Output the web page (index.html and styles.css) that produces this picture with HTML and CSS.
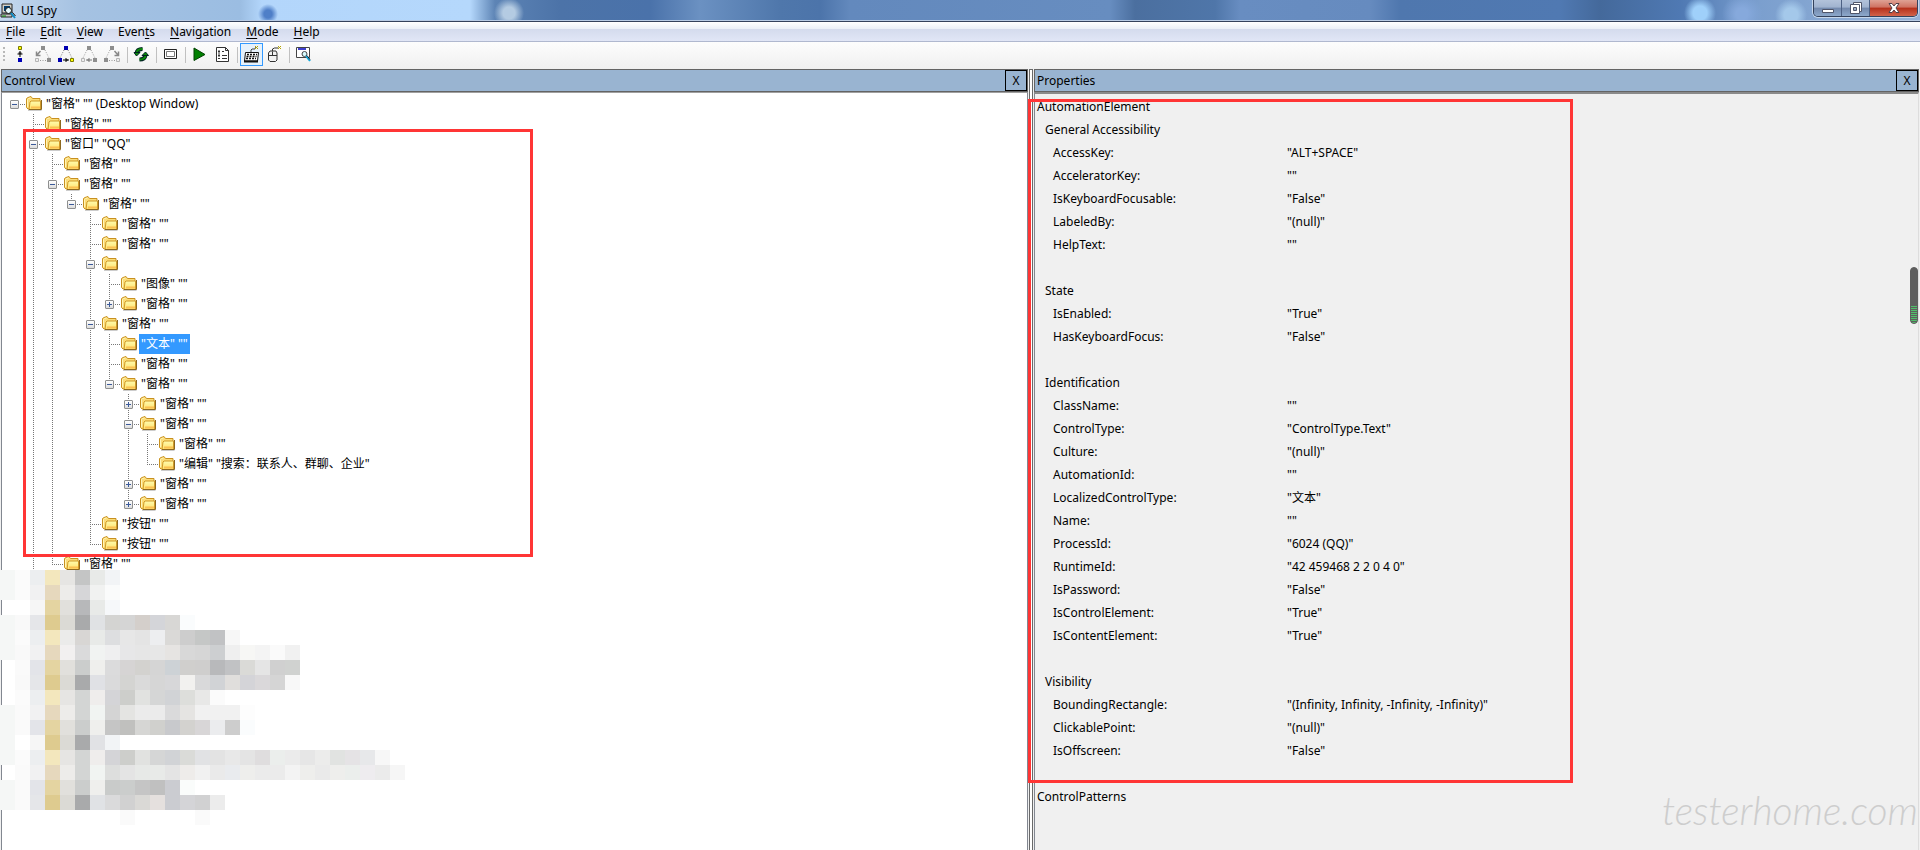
FILE: index.html
```html
<!DOCTYPE html>
<html lang="zh-CN">
<head>
<meta charset="utf-8">
<title>UI Spy</title>
<link rel="stylesheet" href="styles.css">
</head>
<body>
<svg class="defs" aria-hidden="true">
  <defs>
    <linearGradient id="fold" x1="0" y1="0" x2="0" y2="1"><stop offset="0" stop-color="#fffcae"/><stop offset="1" stop-color="#ffdf68"/></linearGradient>
    <symbol id="folder" viewBox="0 0 16 16">
      <path d="M2 14.500h13.500" stroke="#9a9a9a" opacity=".5"/>
      <path d="M.5 11.500V2.500L2 1.500l3-1 1.500 2h7.500v10l-1 .5H2z" fill="#fbdc78" stroke="#c8901f"/>
      <path d="M1.500 11V3.500l1-1 2-.5" fill="none" stroke="#fff5b8"/>
      <path d="M4 6l1-1h9.500v8.500H3z" fill="url(#fold)" stroke="#d09a28"/>
      <path d="M5 11.500h9" stroke="#fbc052" stroke-width="2"/>
      <path d="M15.500 4v9.500H3" fill="none" stroke="#8d681f"/>
    </symbol>
  </defs>
</svg>
<div class="window">
  <header class="titlebar">
    <svg class="app-icon" viewBox="0 0 16 16" aria-hidden="true">
      <path d="M2 1h10v9H2z" fill="#d4d0c8" stroke="#222"/><path d="M4 3h6v5H4z" fill="#003a6c"/>
      <path d="M1 11h11v3H1z" fill="#c5c5c5" stroke="#222"/><path d="M2 13h4" stroke="#080"/>
      <circle cx="8.500" cy="7.500" r="3" fill="#e6fbff" stroke="#111"/><path d="M11 10l4 5" stroke="#0b8ec9" stroke-width="2"/><path d="M12.500 9.500l3 3.500" stroke="#111"/>
    </svg>
    <h1 class="title">UI Spy</h1>
    <div class="caption-buttons">
      <button class="cap" aria-label="Minimize"><svg viewBox="0 0 14 14" class="cap-icon"><path d="M1.500 8.500h11v3h-11z" fill="#fff" stroke="#50566a"/></svg></button>
      <button class="cap" aria-label="Restore"><svg viewBox="0 0 14 14" class="cap-icon"><path d="M4.500 1.500h8v9h-8z" fill="#fff" stroke="#50566a"/><path d="M1.500 3.500h9v9h-9z" fill="#fff" stroke="#50566a"/><path d="M4.500 6.500h3v3h-3z" fill="#9fb0ca" stroke="#50566a"/></svg></button>
      <button class="cap cap-close" aria-label="Close"><svg viewBox="0 0 14 14" class="cap-icon"><path d="M2 2.500h3l2 2.500 2-2.500h3L9 7l3 4.500H9L7 9l-2 2.500H2L5 7z" fill="#fff" stroke="#50404a"/></svg></button>
    </div>
  </header>

  <nav class="menubar" aria-label="Menu">
    <button class="menu"><u>F</u>ile</button>
    <button class="menu"><u>E</u>dit</button>
    <button class="menu"><u>V</u>iew</button>
    <button class="menu">Even<u>t</u>s</button>
    <button class="menu"><u>N</u>avigation</button>
    <button class="menu"><u>M</u>ode</button>
    <button class="menu"><u>H</u>elp</button>
  </nav>

  <div class="toolbar" role="toolbar" aria-label="Tools">
    <span class="grip"></span>
    <button class="tool" aria-label="Parent"><svg viewBox="0 0 17 17"><path d="M6.500.5h3v3h-3z" fill="#ff0" stroke="#7a7a00"/><path d="M8 5v6M5.500 8h5M6.500 7h3" stroke="#000" fill="none"/><path d="M6 12h4v4H6z" fill="#0000b8"/></svg></button>
    <button class="tool" aria-label="First child"><svg viewBox="0 0 17 17"><path d="M6 0h4v4H6zM12 12h4v4h-4z" fill="#8e8e8e"/><path d="M.5 12.500h3v3h-3z" fill="#eee" stroke="#b5b5b5"/><path d="M10 4l4 8M5 14.500h7" stroke="#999" stroke-dasharray="1 1.500" fill="none"/><path d="M5.500 5L2 9M1.500 5.500v4h4" stroke="#888" stroke-width="1.500" fill="none"/></svg></button>
    <button class="tool" aria-label="Next sibling"><svg viewBox="0 0 17 17"><path d="M6 0h4v4H6zM0 12h4v4H0z" fill="#0000b0"/><path d="M12.500 12.500h3v3h-3z" fill="#ff0" stroke="#7a7a00"/><path d="M6 4l-4 8M10 4l4 8" stroke="#777" stroke-dasharray="1 1.500"/><path d="M5 14h6M8 12v4M9 13v2" stroke="#000" fill="none"/></svg></button>
    <button class="tool" aria-label="Previous sibling"><svg viewBox="0 0 17 17"><path d="M6 0h4v4H6zM12 12h4v4h-4z" fill="#8e8e8e"/><path d="M.5 12.500h3v3h-3z" fill="#eee" stroke="#b5b5b5"/><path d="M6 4l-4 8M10 4l4 8" stroke="#999" stroke-dasharray="1 1.500"/><path d="M5 14h6M8 12v4M7 13v2" stroke="#777" fill="none"/></svg></button>
    <button class="tool" aria-label="Last child"><svg viewBox="0 0 17 17"><path d="M6 0h4v4H6zM0 12h4v4H0z" fill="#8e8e8e"/><path d="M12.500 12.500h3v3h-3z" fill="#eee" stroke="#b5b5b5"/><path d="M6 4l-4 8M5 14.500h7" stroke="#999" stroke-dasharray="1 1.500" fill="none"/><path d="M10.500 5L14 9M14.500 5.500v4h-4" stroke="#888" stroke-width="1.500" fill="none"/></svg></button>
    <span class="sep"></span>
    <button class="tool" aria-label="Refresh"><svg viewBox="0 0 17 17"><path d="M3.500 7.500Q4 3 9.500 3" fill="none" stroke="#022" stroke-width="4"/><path d="M3.500 7Q4 3 9.500 3" fill="none" stroke="#0a8a0a" stroke-width="2"/><path d="M1 6.500h6L3.500 10z" fill="#0a8a0a" stroke="#022"/><path d="M12.500 9Q12 13.500 6.500 13.500" fill="none" stroke="#022" stroke-width="4"/><path d="M12.500 9.500Q12 13.500 6.500 13.500" fill="none" stroke="#0a8a0a" stroke-width="2"/><path d="M9 9.500h6.500L12.500 6z" fill="#0a8a0a" stroke="#022"/></svg></button>
    <span class="sep"></span>
    <button class="tool" aria-label="Highlight"><svg viewBox="0 0 17 17"><path d="M2.500 3.500h12v9h-12z" fill="#fff" stroke="#222"/><path d="M4.500 5.500h8v5h-8z" fill="#fff" stroke="#777"/></svg></button>
    <span class="sep"></span>
    <button class="tool" aria-label="Start events"><svg viewBox="0 0 17 17"><path d="M3 2l11 6.500L3 14.500z" fill="#008000" stroke="#004000"/></svg></button>
    <button class="tool" aria-label="Configure events"><svg viewBox="0 0 17 17"><path d="M2.500 1.500h9l3 3v11h-12z" fill="#fff" stroke="#333"/><path d="M11.500 1.500v3h3" fill="none" stroke="#333"/><path d="M4 5.500h2M8 5.500h2M4 9.500h2M8 9.500h5M4 12.500h2M8 12.500h5M5 4v4M5 8v3" stroke="#333"/></svg></button>
    <span class="sep"></span>
    <button class="tool pressed" aria-label="Keyboard" aria-pressed="true"><svg viewBox="0 0 17 17"><path d="M2.500 6.500h13l-1 8.500h-13z" fill="#fff" stroke="#111"/><path d="M4 8.500h10M3.500 10.500h10M3 12.500h10" stroke="#111" stroke-width="1.500" stroke-dasharray="2 1"/><path d="M1 15.500h14" stroke="#111" stroke-width="2"/><path d="M8 6V4l1-1h3l1-2" fill="none" stroke="#444"/><path d="M12 0l3 3M15 0l-3 3" stroke="#b5a400"/></svg></button>
    <button class="tool" aria-label="Mouse"><svg viewBox="0 0 17 17"><path d="M2.500 7l1.500-2h6l1 2v7l-1.500 1.500H4L2.500 14z" fill="#f2f2f2" stroke="#333"/><path d="M3 9.500h8M6.500 5.500v4M6.500 5V3l2-1h4" fill="none" stroke="#333"/><path d="M12 0l3 3M15 0l-3 3" stroke="#b5a400"/></svg></button>
    <span class="sep"></span>
    <button class="tool" aria-label="Inspect"><svg viewBox="0 0 17 17"><path d="M1.500 1.500h13v10h-13z" fill="#fff" stroke="#444"/><path d="M3 3h8" stroke="#0000c0" stroke-width="1.500"/><circle cx="9.500" cy="8" r="2.500" fill="#d8fbff" stroke="#444"/><path d="M11 10l4 5" stroke="#11a6d8" stroke-width="2"/><path d="M12 9.500l3 4" stroke="#123"/></svg></button>
  </div>

  <main class="panes">
    <section class="pane">
      <div class="pane-head"><h2 class="pane-title">Control View</h2><button class="pane-close" aria-label="Close Control View">X</button></div>
      <div class="pane-body tree-body">
        <ul class="tree">
          <li><div class="row"><button class="exp" aria-label="Collapse"></button><i class="dash"></i><svg class="folder"><use href="#folder"/></svg><span class="label">"窗格" "" (Desktop Window)</span></div>
            <ul>
              <li><div class="row"><i class="dash"></i><svg class="folder"><use href="#folder"/></svg><span class="label">"窗格" ""</span></div></li>
              <li class="more"><div class="row"><button class="exp" aria-label="Collapse"></button><i class="dash"></i><svg class="folder"><use href="#folder"/></svg><span class="label">"窗口" "QQ"</span></div>
                <ul>
                  <li><div class="row"><i class="dash"></i><svg class="folder"><use href="#folder"/></svg><span class="label">"窗格" ""</span></div></li>
                  <li><div class="row"><button class="exp" aria-label="Collapse"></button><i class="dash"></i><svg class="folder"><use href="#folder"/></svg><span class="label">"窗格" ""</span></div>
                    <ul>
                      <li><div class="row"><button class="exp" aria-label="Collapse"></button><i class="dash"></i><svg class="folder"><use href="#folder"/></svg><span class="label">"窗格" ""</span></div>
                        <ul>
                          <li><div class="row"><i class="dash"></i><svg class="folder"><use href="#folder"/></svg><span class="label">"窗格" ""</span></div></li>
                          <li><div class="row"><i class="dash"></i><svg class="folder"><use href="#folder"/></svg><span class="label">"窗格" ""</span></div></li>
                          <li><div class="row"><button class="exp" aria-label="Collapse"></button><i class="dash"></i><svg class="folder"><use href="#folder"/></svg></div>
                            <ul>
                              <li><div class="row"><i class="dash"></i><svg class="folder"><use href="#folder"/></svg><span class="label">"图像" ""</span></div></li>
                              <li><div class="row"><button class="exp plus" aria-label="Expand"></button><i class="dash"></i><svg class="folder"><use href="#folder"/></svg><span class="label">"窗格" ""</span></div></li>
                            </ul>
                          </li>
                          <li><div class="row"><button class="exp" aria-label="Collapse"></button><i class="dash"></i><svg class="folder"><use href="#folder"/></svg><span class="label">"窗格" ""</span></div>
                            <ul>
                              <li><div class="row"><i class="dash"></i><svg class="folder"><use href="#folder"/></svg><span class="label selected">"文本" ""</span></div></li>
                              <li><div class="row"><i class="dash"></i><svg class="folder"><use href="#folder"/></svg><span class="label">"窗格" ""</span></div></li>
                              <li><div class="row"><button class="exp" aria-label="Collapse"></button><i class="dash"></i><svg class="folder"><use href="#folder"/></svg><span class="label">"窗格" ""</span></div>
                                <ul>
                                  <li><div class="row"><button class="exp plus" aria-label="Expand"></button><i class="dash"></i><svg class="folder"><use href="#folder"/></svg><span class="label">"窗格" ""</span></div></li>
                                  <li><div class="row"><button class="exp" aria-label="Collapse"></button><i class="dash"></i><svg class="folder"><use href="#folder"/></svg><span class="label">"窗格" ""</span></div>
                                    <ul>
                                      <li><div class="row"><i class="dash"></i><svg class="folder"><use href="#folder"/></svg><span class="label">"窗格" ""</span></div></li>
                                      <li><div class="row"><i class="dash"></i><svg class="folder"><use href="#folder"/></svg><span class="label">"编辑" "搜索：联系人、群聊、企业"</span></div></li>
                                    </ul>
                                  </li>
                                  <li><div class="row"><button class="exp plus" aria-label="Expand"></button><i class="dash"></i><svg class="folder"><use href="#folder"/></svg><span class="label">"窗格" ""</span></div></li>
                                  <li><div class="row"><button class="exp plus" aria-label="Expand"></button><i class="dash"></i><svg class="folder"><use href="#folder"/></svg><span class="label">"窗格" ""</span></div></li>
                                </ul>
                              </li>
                            </ul>
                          </li>
                          <li><div class="row"><i class="dash"></i><svg class="folder"><use href="#folder"/></svg><span class="label">"按钮" ""</span></div></li>
                          <li><div class="row"><i class="dash"></i><svg class="folder"><use href="#folder"/></svg><span class="label">"按钮" ""</span></div></li>
                        </ul>
                      </li>
                    </ul>
                  </li>
                  <li><div class="row"><i class="dash"></i><svg class="folder"><use href="#folder"/></svg><span class="label">"窗格" ""</span></div></li>
                </ul>
              </li>
            </ul>
          </li>
        </ul>
      </div>
      <svg class="mosaic" id="mosaic" viewBox="0 0 420 260" aria-hidden="true"></svg>
      <div class="mark mark-tree"></div>
    </section>

    <div class="splitter"></div>

    <section class="pane">
      <div class="pane-head"><h2 class="pane-title">Properties</h2><button class="pane-close" aria-label="Close Properties">X</button></div>
      <div class="pane-body props-body">
        <table class="props">
          <colgroup><col class="col-name"><col></colgroup>
          <tbody>
            <tr><th colspan="2">AutomationElement</th></tr>
            <tr><th colspan="2" class="group">General Accessibility</th></tr>
            <tr><td>AccessKey:</td><td>"ALT+SPACE"</td></tr>
            <tr><td>AcceleratorKey:</td><td>""</td></tr>
            <tr><td>IsKeyboardFocusable:</td><td>"False"</td></tr>
            <tr><td>LabeledBy:</td><td>"(null)"</td></tr>
            <tr><td>HelpText:</td><td>""</td></tr>
            <tr><td colspan="2"></td></tr>
          </tbody>
          <tbody>
            <tr><th colspan="2" class="group">State</th></tr>
            <tr><td>IsEnabled:</td><td>"True"</td></tr>
            <tr><td>HasKeyboardFocus:</td><td>"False"</td></tr>
            <tr><td colspan="2"></td></tr>
          </tbody>
          <tbody>
            <tr><th colspan="2" class="group">Identification</th></tr>
            <tr><td>ClassName:</td><td>""</td></tr>
            <tr><td>ControlType:</td><td>"ControlType.Text"</td></tr>
            <tr><td>Culture:</td><td>"(null)"</td></tr>
            <tr><td>AutomationId:</td><td>""</td></tr>
            <tr><td>LocalizedControlType:</td><td>"文本"</td></tr>
            <tr><td>Name:</td><td>""</td></tr>
            <tr><td>ProcessId:</td><td>"6024 (QQ)"</td></tr>
            <tr><td>RuntimeId:</td><td>"42 459468 2 2 0 4 0"</td></tr>
            <tr><td>IsPassword:</td><td>"False"</td></tr>
            <tr><td>IsControlElement:</td><td>"True"</td></tr>
            <tr><td>IsContentElement:</td><td>"True"</td></tr>
            <tr><td colspan="2"></td></tr>
          </tbody>
          <tbody>
            <tr><th colspan="2" class="group">Visibility</th></tr>
            <tr><td>BoundingRectangle:</td><td>"(Infinity, Infinity, -Infinity, -Infinity)"</td></tr>
            <tr><td>ClickablePoint:</td><td>"(null)"</td></tr>
            <tr><td>IsOffscreen:</td><td>"False"</td></tr>
            <tr><td colspan="2"></td></tr>
          </tbody>
          <tbody>
            <tr><th colspan="2">ControlPatterns</th></tr>
          </tbody>
        </table>
      </div>
      <div class="mark mark-props"></div>
      <div class="meter"></div>
      <div class="watermark">testerhome.com</div>
    </section>
  </main>
</div>
<script src="mosaic.js"></script>
</body>
</html>
```

FILE: styles.css
```css
* { box-sizing: border-box; }
body {
  margin: 0;
  font: 12px/16px "Noto Sans", "Noto Sans CJK SC", sans-serif;
  color: #000;
  background: #f0f0f0;
}
button { font: inherit; color: inherit; padding: 0; border: 0; background: none; }
h1, h2 { margin: 0; font-size: 12px; font-weight: 400; }
ul { list-style: none; margin: 0; padding: 0; }
.defs { position: absolute; width: 0; height: 0; }
.window { height: 100vh; display: flex; flex-direction: column; overflow: hidden; }

.titlebar {
  flex: none;
  height: 22px;
  display: flex;
  align-items: center;
  border-bottom: 1px solid #34425c;
  box-shadow: inset 0 -1px #b8cbe4;
  background:
    radial-gradient(circle at 268px 14px, #4f7fc8 4px, transparent 10px),
    radial-gradient(ellipse at 318px 16px, #93b4d8 10px, transparent 40px),
    radial-gradient(circle at 509px 13px, #b4cbe2 6px, transparent 15px),
    radial-gradient(ellipse at 120px 15px, #8fa9c6 20px, transparent 60px),
    radial-gradient(circle at 1700px 13px, #9fd0fa 7px, transparent 16px),
    radial-gradient(circle at 1742px 14px, #86a9dc 6px, transparent 20px),
    radial-gradient(circle at 1791px 15px, #a4c8ea 7px, transparent 16px),
    linear-gradient(90deg, #c5d8ee 0, #a5c2e2 80px, #9bbde2 240px, #b3d6fb 262px, #b5d8fc 470px, #5d84b5 495px, #4c73a8 560px, #4a72aa 650px, #6b91c2 700px, #4f77ab 780px, #4c74aa 820px, #6389bd 850px, #678dc0 1110px, #4b6f9f 1135px, #4f76a9 1215px, #688dc1 1240px, #668bbf 1370px, #4f77ae 1400px, #5079b2 1560px, #44699b 1600px, #4f79b3 1680px, #7b9fce 1760px, #95b2d8 1920px);
}
.app-icon { width: 16px; height: 16px; }
.title { margin-left: 5px; flex: 1; }
.caption-buttons {
  display: flex;
  align-self: flex-start;
  margin-right: 2px;
  border: 1px solid #34425c;
  border-top: 0;
  border-radius: 0 0 5px 5px;
  overflow: hidden;
  box-shadow: 0 0 0 1px #c7d7ea;
}
.cap {
  width: 28px;
  height: 16px;
  display: grid;
  place-items: center;
  border-right: 1px solid #4d6184;
  background: linear-gradient(#b3c3da 0, #a0b3cf 45%, #7288ac 50%, #8da9cb 100%);
}
.cap-close { width: 47px; border-right: 0; background: linear-gradient(#dfa295 0, #cf7262 45%, #b5301b 50%, #d2634a 100%); }
.cap-icon { width: 14px; height: 14px; }

.menubar {
  flex: none;
  height: 20px;
  display: flex;
  gap: 15px;
  padding: 0 6px;
  align-items: center;
  background: linear-gradient(#fff 0, #eaeff7 7px, #d4dbed 7px, #e1e6f6 100%);
  border-bottom: 1px solid #b0b8cf;
  box-shadow: 0 1px #f0f0f0;
}
.menu { line-height: 18px; }
.menu u { text-underline-offset: 2px; }

.toolbar {
  flex: none;
  height: 27px;
  display: flex;
  align-items: center;
  padding-bottom: 2px;
  background: linear-gradient(#fdfdfd, #f0f0f0);
}
.grip { width: 3px; height: 16px; margin: 0 3px; background: repeating-linear-gradient(#b8b8b8 0 2px, transparent 2px 4px) no-repeat 0 0 / 2px 100%; }
.tool { width: 23px; height: 23px; display: grid; place-items: center; }
.tool svg { width: 17px; height: 17px; }
.pressed { border: 1px solid #3399ff; background: #e6f1fb; }
.sep { width: 6px; height: 16px; background: linear-gradient(#c0c0c0, #c0c0c0) no-repeat 3px 0 / 1px 100%; }

.panes { flex: 1; min-height: 0; display: grid; grid-template-columns: 1027fr 6px 885fr; padding: 0 1px; }
.pane { position: relative; min-width: 0; display: flex; flex-direction: column; }
.pane-head {
  flex: none;
  height: 23px;
  display: flex;
  align-items: stretch;
  background: #99b4d1;
  border: 1px solid #646464;
}
.pane-title { flex: 1; padding-left: 2px; line-height: 21px; }
.pane-close { width: 22px; border: 1px solid #000; line-height: 18px; }
.pane-body { flex: 1; min-height: 0; overflow: hidden; border-left: 1px solid #828790; border-right: 1px solid #828790; }
.tree-body { background: #fff; padding: 1px 0 0 8px; border-top: 1px solid #a0a0a0; }
.splitter { border: solid #696969; border-width: 1px 1px 0; margin: 0 1px; background: #fff; }

.tree li { position: relative; }
.tree ul { padding-left: 19px; }
.tree ul > li::before {
  content: "";
  position: absolute;
  left: 4px;
  top: 0;
  bottom: 0;
  width: 1px;
  background: repeating-linear-gradient(#777 0 1px, transparent 1px 2px);
}
.tree ul > li:last-child:not(.more)::before { bottom: auto; height: 11px; }
.row { display: flex; align-items: center; height: 20px; }
.exp {
  position: relative;
  flex: none;
  width: 9px;
  height: 9px;
  border: 1px solid #8e8f8f;
  border-radius: 1px;
  background: linear-gradient(#3b5a9a, #3b5a9a) no-repeat center / 5px 1px, linear-gradient(#fff, #dcdcdc);
}
.plus { background: linear-gradient(#3b5a9a, #3b5a9a) no-repeat center / 5px 1px, linear-gradient(#3b5a9a, #3b5a9a) no-repeat center / 1px 5px, linear-gradient(#fff, #dcdcdc); }
.dash { flex: none; width: 7px; height: 1px; background: repeating-linear-gradient(90deg, transparent 0 1px, #777 1px 2px); }
.dash:first-child { width: 11px; margin-left: 5px; }
.folder { flex: none; width: 16px; height: 16px; }
.label { padding: 0 2px; margin-left: 2px; line-height: 20px; white-space: nowrap; }
.selected { background: #3399ff; color: #fff; }

.props-body { padding-top: 1px; border-top: 2px solid #8a8a8a; border-right-color: #ddd; }
.props { border-collapse: collapse; width: 100%; table-layout: fixed; }
.col-name { width: 252px; }
.props th, .props td { height: 23px; padding: 0; font-weight: 400; text-align: left; white-space: nowrap; }
.props th { padding-left: 2px; }
.props .group { padding-left: 10px; }
.props td:first-child { padding-left: 18px; }

.mark { position: absolute; border: 3px solid #ff3535; pointer-events: none; }
.mark-tree { left: 22px; top: 60px; width: 510px; height: 428px; }
.mark-props { left: -6px; top: 30px; width: 545px; height: 684px; }
.mosaic { position: absolute; left: -1px; top: 501px; width: 420px; height: 260px; }
.meter {
  position: absolute;
  right: 1px;
  top: 198px;
  width: 8px;
  height: 57px;
  border: 1px solid #5e5e5e;
  border-radius: 4px;
  background: repeating-linear-gradient(#4fc06a 0 1px, #5e5e5e 1px 2px) no-repeat 0 100% / 100% 17px, #5e5e5e;
}
.watermark { position: absolute; right: 1px; bottom: 20px; font: italic 300 39px/40px Lato, sans-serif; color: #cdcdcd; }
```

FILE: mosaic.js
```javascript
// Pixelated block covering the lower tree rows: 15px cells, one string per row, "-" = empty.
const rows = [
  "f5f7f6 fbfbfb eceef0 f3e7bd e6e5e3 c4c5c5 e8eae8 f2f4f6",
  "f5f7f6 fbfbfb f1f1f2 e6d8bd edecea d6d6d8 f1f2f1 fafbfb",
  "- - f6f6f6 e4d4a1 e1e0dc b7b8ba e8eae8 f6f8fa",
  "f5f7f6 f9f9f9 e5e6e9 decb8f dbdad5 a9aaab e0e2e4 d4d4d2 d5d5d5 d4cfcb d4d5d9 d8d7d5 fafcfd",
  "f5f7f6 fbfbfb eceef0 f3e7bd ebebea d8d6d4 e8eae8 dddee0 e7e7e7 e4e4e4 edeef0 dad9d7 cdcdcd c5c7c6 c1c2c4 f7f7f7",
  "f5f7f6 f9f9f9 f1f1f2 e6d8bd f2f0f0 dadadb f1f3f2 efeff0 e7e7e8 e6e6e6 e7e7e7 e6e4e2 d8d8d8 d6d6d6 cdcfd1 efefef f7f7f5 f4f4f4 fafafa f1f1f1",
  "- fafafa e3e4e9 e4d4a1 e1e0dc cbcdcc efefed dbdbdc d6d4d4 d3d2cf d5d5d5 cdd2d6 d0cfcd cfcecd b8b9bb c1c2c4 dadad7 e5e5e5 d0d0d0 d0d2d0",
  "- f9f9f9 e5e6e9 decb8f dbdad5 a9aaab e0e1e5 dadadb d4d4d2 dadada d6d6d6 d7d7d9 f2f1ef d9d9da d1d3d6 e0dedc d4d4d8 dad8da d5d5d5 f8f8f8",
  "- fbfbfb eceef0 f3e7bd e6e5e3 d3d5d4 efedec d4d4d7 cdcecb e1e2e0 d5d6d6 d1d3d6 dddedb e8e8e7 fbfbfb",
  "f5f7f6 fafafa f1f1f2 e6d8bd edecea d3d5d4 f1f4f2 d4d4d4 e4e4e2 ebebeb ebebeb dadadb e5e4e2 f1f1f1 f1f1f1 f1f1f1 fdfdfd",
  "f5f7f6 fafafa e3e4e9 e4d4a1 e1e0dc cbcdcc efefed c5c5c5 c0c0be d6d6d4 d0d0cd c8c9cc d3d2cf d8d6d7 ebecee cdcdcd fafcfd",
  "f5f7f6 - f6f6f6 decb8f dbdad5 a9aaab e1e2e5 f2f4f6",
  "f5f7f6 fbfbfb eceef0 f3e7bd e6e5e3 d3d5d4 efedec d4d4d7 cdcecb e1e2e0 d5d6d6 d1d3d6 dadbd8 e1e2e4 e3e3e3 e8e8e8 e4e4e4 dfddde ebeeec ebebeb e6e6e6 ececeb e1e3e1 e5e3e5 e7e8ea f7f7f7",
  "- fafafa f1f1f2 e6d8bd edecea d3d5d4 f1f4f2 dddedd e4e4e4 e7e9e7 e8eae8 e4e4e4 eeecea f1f1f1 eaeaea e9ebee eeeeec ebebeb ebebeb f3f3f3 eeeeec eaeaea eeeeec ebeeec eeecef ebebeb f6f6f6",
  "f5f7f6 fafafa e3e4e9 e4d4a1 e1e0dc cbcdcc efefed c9cbca cbcdcc c5c5c5 c0c0c0 cbccd1 fafcfb",
  "f5f7f6 fafafa e5e6e9 decb8f dbdad5 a9aaab e0e2e5 dadadb d1d1d1 dad9d6 e5e0de cbccd1 d4d4d7 d1d1d2 ececec",
  "- - - - - - - - fafafa - - - - fafafa"
];
const svg = document.getElementById("mosaic");
const add = (x, y, fill) => {
  const r = document.createElementNS("http://www.w3.org/2000/svg", "rect");
  r.setAttribute("x", x);
  r.setAttribute("y", y);
  r.setAttribute("width", 15);
  r.setAttribute("height", 15);
  r.setAttribute("fill", fill);
  r.setAttribute("shape-rendering", "crispEdges");
  svg.appendChild(r);
};
rows.forEach((line, j) => line.split(" ").forEach((c, i) => {
  if (c !== "-") add(i * 15, j * 15, "#" + c);
}));
```
